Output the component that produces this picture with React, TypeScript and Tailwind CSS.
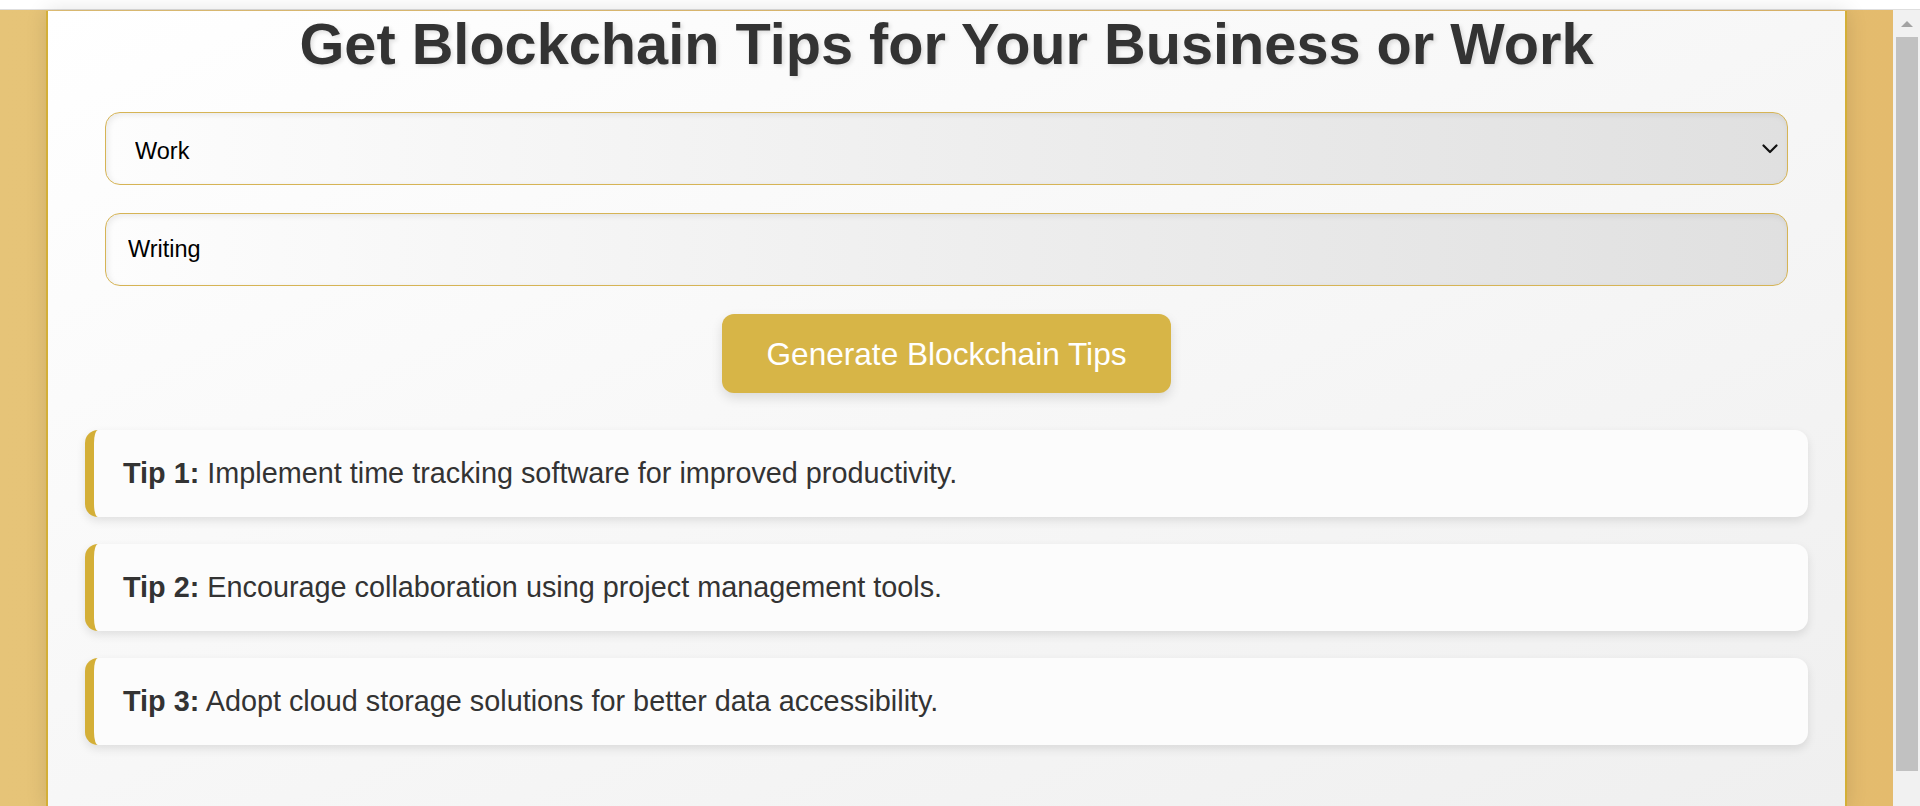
import React from "react";

const tips = [
	"Implement time tracking software for improved productivity.",
	"Encourage collaboration using project management tools.",
	"Adopt cloud storage solutions for better data accessibility.",
];

const App: React.FC = () => {
	return (
		<div className="flex h-[806px] flex-col overflow-hidden font-['Liberation_Sans',Arial,sans-serif]">
			{/* top strip */}
			<div className="h-[10px] shrink-0 border-b border-[#dedede] bg-white" />

			<div className="flex min-h-0 flex-1">
				<div className="flex-1 bg-linear-to-r from-[#e6c478] to-[#e4bb6d] px-[46px]">
					<div className="h-full border-x-2 border-[#d4af37] bg-linear-to-br from-white to-[#efefef] px-[37px] shadow-[0_0_20px_rgba(0,0,0,0.12)]">
						<h1 className="mt-[1px] text-center text-[57.7px] font-bold leading-[66px] text-[#333] [text-shadow:2px_2px_4px_rgba(0,0,0,0.12)]">
							Get Blockchain Tips for Your Business or Work
						</h1>

						<div className="mt-[35px] flex flex-col gap-[28px] px-[20px]">
							<div className="relative">
								<select
									defaultValue="work"
									className="block h-[73px] w-full appearance-none rounded-[15px] border border-[#d6b455] bg-linear-to-r from-[#fdfdfd] to-[#e0e0e0] pl-[29px] pr-[50px] pt-[6px] text-[23.5px] text-black shadow-[inset_2px_2px_6px_rgba(0,0,0,0.08)] outline-none"
								>
									<option value="business">Business</option>
									<option value="work">Work</option>
								</select>
								<svg
									className="pointer-events-none absolute right-[10px] top-1/2 h-[10px] w-[16px] -translate-y-1/2"
									viewBox="0 0 16 10"
									fill="none"
									stroke="#111"
									strokeWidth={2.2}
								>
									<title>Open</title>
									<path d="M1.5 1.5 8 8l6.5-6.5" strokeLinecap="round" strokeLinejoin="round" />
								</svg>
							</div>

							<input
								type="text"
								defaultValue="Writing"
								className="block h-[73px] w-full rounded-[15px] border border-[#d6b455] bg-linear-to-r from-[#fdfdfd] to-[#e0e0e0] px-[22px] text-[23.5px] text-black shadow-[inset_2px_2px_6px_rgba(0,0,0,0.08)] outline-none"
							/>
						</div>

						<div className="mt-[28px] flex justify-center">
							<button
								type="button"
								className="flex h-[79px] items-center rounded-[12px] bg-[#d7b547] px-[44px] text-[31.6px] leading-[36px] text-white shadow-[0_5px_12px_rgba(0,0,0,0.12)]"
							>
								Generate Blockchain Tips
							</button>
						</div>

						<div className="mt-[37px] flex flex-col gap-[27px]">
							{tips.map((tip, i) => (
								<div
									key={tip}
									className="rounded-[13px] border-l-[9px] border-[#d4af37] bg-[#fcfcfc] py-[27px] pl-[29px] text-[28.8px] leading-[33px] text-[#333] shadow-[0_4px_10px_rgba(0,0,0,0.1)]"
								>
									<strong className="font-bold">Tip {i + 1}:</strong> {tip}
								</div>
							))}
						</div>
					</div>
				</div>

				{/* scrollbar */}
				<div className="flex w-[27px] shrink-0 flex-col bg-[#f1f1f1] pl-[3px] pr-[2px]">
					<div className="flex h-[27px] items-center justify-center">
						<div className="h-0 w-0 border-x-[6px] border-b-[6px] border-x-transparent border-b-[#a3a3a3]" />
					</div>
					<div className="h-[734px] bg-[#c1c1c1]" />
				</div>
			</div>
		</div>
	);
};

export default App;
